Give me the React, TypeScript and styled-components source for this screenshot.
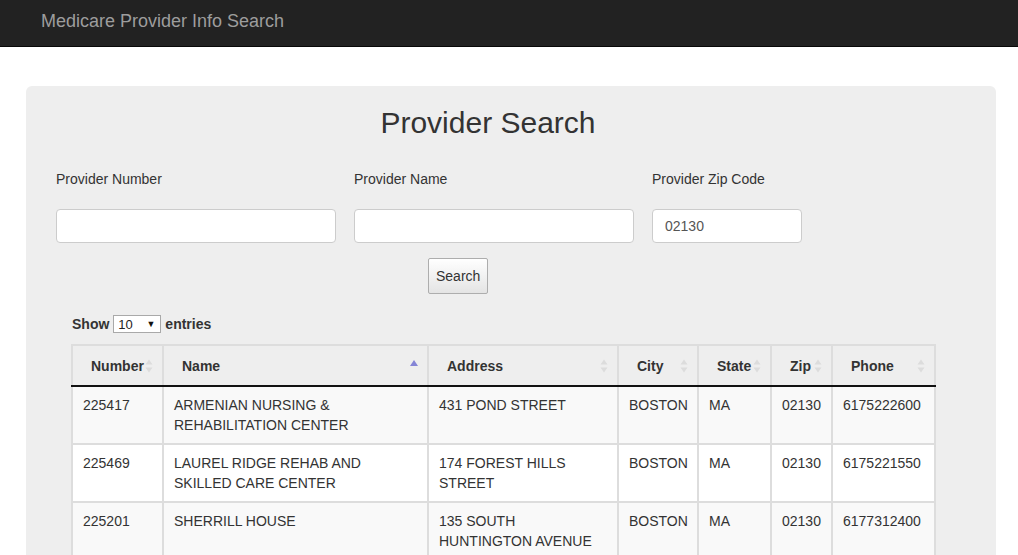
import React from "react";
import styled, { createGlobalStyle } from "styled-components";

const GlobalStyle = createGlobalStyle`
  html, body { margin: 0; padding: 0; background: #fff; }
  body {
    font-family: "Liberation Sans", Arial, Helvetica, sans-serif;
    font-size: 14px;
    line-height: 20px;
    color: #333;
  }
  * { box-sizing: border-box; }
`;

const Navbar = styled.nav`
  height: 47px;
  background: #222;
  border-bottom: 1px solid #080808;
  display: flex;
  align-items: flex-start;
  padding: 11px 0 0 41px;
`;

const Brand = styled.span`
  font-size: 18px;
  line-height: 20px;
  color: #9d9d9d;
`;

const Jumbotron = styled.section`
  margin: 39px 22px 0 26px;
  background: #eee;
  border-radius: 6px;
  padding: 20px 30px 40px 30px;
`;

const Title = styled.h2`
  margin: 0;
  width: 864px;
  text-align: center;
  font-size: 30px;
  line-height: 33px;
  font-weight: 500;
  color: #333;
`;

const FieldRow = styled.div`
  display: flex;
  gap: 18px;
  margin-top: 30px;
`;

const Field = styled.div<{ $w: number }>`
  width: 280px;
  display: flex;
  flex-direction: column;
  gap: 20px;
  & > input { width: ${(p) => p.$w}px; }
`;

const Label = styled.label`
  font-size: 14px;
  line-height: 20px;
  color: #333;
`;

const Input = styled.input`
  height: 34px;
  padding: 6px 12px;
  font: inherit;
  color: #555;
  background: #fff;
  border: 1px solid #ccc;
  border-radius: 4px;
  outline: none;
`;

const ButtonRow = styled.div`
  margin: 15px 0 0 372px;
`;

const Button = styled.button`
  height: 36px;
  padding: 0 7px;
  font: inherit;
  font-size: 14px;
  color: #333;
  background: linear-gradient(#fff, #e4e4e4);
  border: 1px solid #adadad;
  border-radius: 2px;
`;

const TableArea = styled.div`
  margin-top: 20px;
  padding-left: 16px;
`;

const LengthRow = styled.div`
  display: flex;
  align-items: center;
  gap: 4px;
  font-size: 14px;
  font-weight: bold;
  height: 20px;
`;

const SelectWrap = styled.span`
  position: relative;
  display: inline-flex;
`;

const Select = styled.select`
  appearance: none;
  width: 48px;
  height: 18px;
  padding: 0 0 0 4px;
  font-family: inherit;
  font-size: 13px;
  font-weight: normal;
  color: #222;
  background: #fff;
  border: 1px solid #a9a9a9;
  border-radius: 0;
`;

const Caret = styled.span`
  position: absolute;
  right: 6px;
  top: 1px;
  font-size: 9px;
  line-height: 16px;
  color: #111;
  pointer-events: none;
`;

const Table = styled.table`
  margin: 10px 0 0 -1px;
  width: 862px;
  table-layout: fixed;
  border-collapse: collapse;
  border: 2px solid #ddd;
`;

const Th = styled.th<{ $w: number }>`
  position: relative;
  width: ${(p) => p.$w}px;
  height: 41px;
  padding: 8px 18px 8px 18px;
  text-align: left;
  font-weight: bold;
  font-size: 14px;
  color: #333;
  background: #eee;
  border: 2px solid #ddd;
  border-bottom: 2px solid #111;
  white-space: nowrap;
`;

const SortIcon = styled.svg`
  position: absolute;
  right: 8px;
  top: 50%;
  margin-top: -8px;
`;

const Tr = styled.tr<{ $odd: boolean }>`
  background: ${(p) => (p.$odd ? "#f9f9f9" : "#fff")};
`;

const Td = styled.td`
  vertical-align: top;
  padding: 8px 10px 8px 10px;
  height: 58px;
  border: 2px solid #ddd;
  font-size: 14px;
  line-height: 20px;
  color: #333;
`;

const Sort = ({ active }: { active?: boolean }) =>
  active ? (
    <SortIcon width="10" height="16" viewBox="0 0 10 16">
      <polygon points="5,2 9,8 1,8" fill="#8585d6" />
    </SortIcon>
  ) : (
    <SortIcon width="10" height="16" viewBox="0 0 10 16">
      <polygon points="5,1.5 8.5,6.5 1.5,6.5" fill="#dcdcdc" />
      <polygon points="5,14.5 8.5,9.5 1.5,9.5" fill="#dcdcdc" />
    </SortIcon>
  );

const columns = [
  { label: "Number", w: 91 },
  { label: "Name", w: 265, active: true },
  { label: "Address", w: 190 },
  { label: "City", w: 80 },
  { label: "State", w: 73 },
  { label: "Zip", w: 61 },
  { label: "Phone", w: 103 },
];

const rows = [
  ["225417", "ARMENIAN NURSING & REHABILITATION CENTER", "431 POND STREET", "BOSTON", "MA", "02130", "6175222600"],
  ["225469", "LAUREL RIDGE REHAB AND SKILLED CARE CENTER", "174 FOREST HILLS STREET", "BOSTON", "MA", "02130", "6175221550"],
  ["225201", "SHERRILL HOUSE", "135 SOUTH HUNTINGTON AVENUE", "BOSTON", "MA", "02130", "6177312400"],
];

export default function App() {
  return (
    <>
      <GlobalStyle />
      <Navbar>
        <Brand>Medicare Provider Info Search</Brand>
      </Navbar>
      <Jumbotron>
        <Title>Provider Search</Title>
        <FieldRow>
          <Field $w={280}>
            <Label>Provider Number</Label>
            <Input />
          </Field>
          <Field $w={280}>
            <Label>Provider Name</Label>
            <Input />
          </Field>
          <Field $w={150}>
            <Label>Provider Zip Code</Label>
            <Input defaultValue="02130" />
          </Field>
        </FieldRow>
        <ButtonRow>
          <Button>Search</Button>
        </ButtonRow>
        <TableArea>
          <LengthRow>
            Show
            <SelectWrap>
              <Select defaultValue="10">
                <option>10</option>
                <option>25</option>
                <option>50</option>
                <option>100</option>
              </Select>
              <Caret>▼</Caret>
            </SelectWrap>
            entries
          </LengthRow>
          <Table>
            <thead>
              <tr>
                {columns.map((c) => (
                  <Th key={c.label} $w={c.w}>
                    {c.label}
                    <Sort active={c.active} />
                  </Th>
                ))}
              </tr>
            </thead>
            <tbody>
              {rows.map((r, i) => (
                <Tr key={r[0]} $odd={i % 2 === 0}>
                  {r.map((v, j) => (
                    <Td key={j}>{v}</Td>
                  ))}
                </Tr>
              ))}
            </tbody>
          </Table>
        </TableArea>
      </Jumbotron>
    </>
  );
}
